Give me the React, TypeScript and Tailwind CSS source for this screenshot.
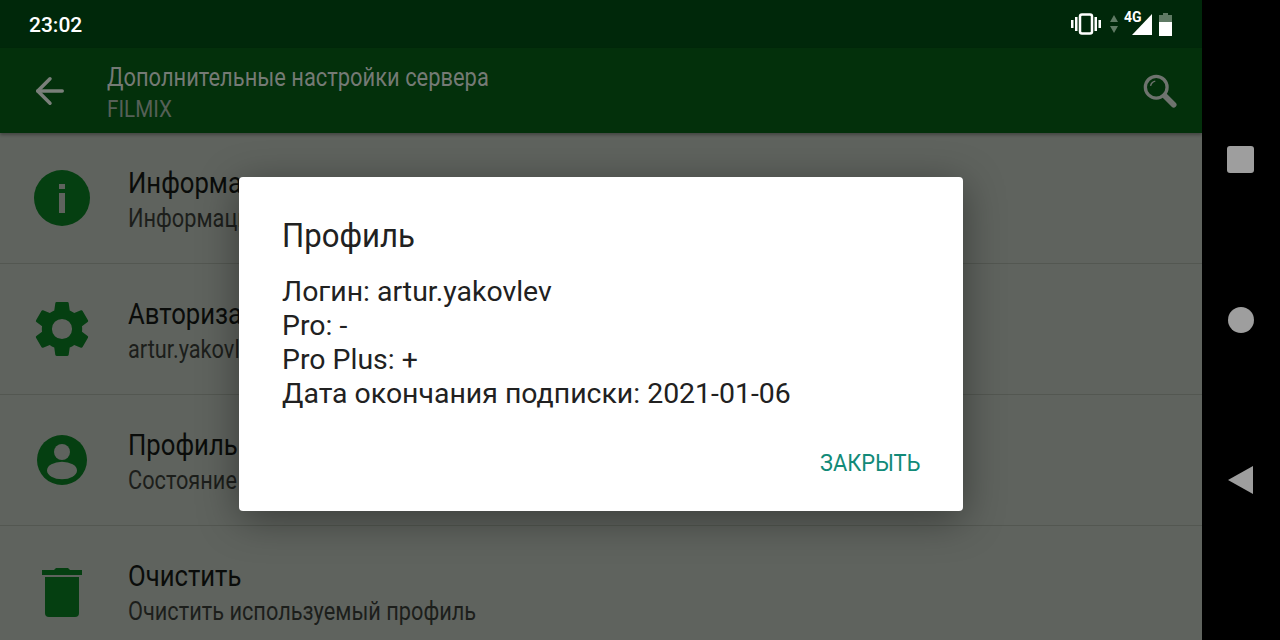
import { ArrowLeft } from "lucide-react";

const font = "font-['Roboto','Noto_Sans',sans-serif]";

function InfoIcon() {
  return (
    <svg width="56" height="56" viewBox="0 0 56 56">
      <circle cx="28" cy="28" r="28" fill="#053f11" />
      <rect x="25" y="23" width="6" height="20" fill="#5f635e" />
      <rect x="25" y="14" width="6" height="5" fill="#5f635e" />
    </svg>
  );
}

function GearIcon() {
  return (
    <svg width="56" height="56" viewBox="2 2 20 20" fill="#053f11">
      <path d="M19.14 12.94c.04-.3.06-.61.06-.94s-.02-.64-.07-.94l2.03-1.58a.49.49 0 0 0 .12-.61l-1.92-3.32a.49.49 0 0 0-.59-.22l-2.39.96a7 7 0 0 0-1.62-.94l-.36-2.54a.48.48 0 0 0-.48-.41h-3.84a.47.47 0 0 0-.47.41l-.36 2.54c-.59.24-1.13.57-1.62.94l-2.39-.96a.48.48 0 0 0-.59.22L2.74 8.87a.47.47 0 0 0 .12.61l2.03 1.58c-.05.3-.09.63-.09.94s.02.64.07.94l-2.03 1.58a.49.49 0 0 0-.12.61l1.92 3.32c.12.22.37.29.59.22l2.39-.96c.5.38 1.03.7 1.62.94l.36 2.54c.05.24.24.41.48.41h3.84c.24 0 .44-.17.47-.41l.36-2.54c.59-.24 1.13-.56 1.62-.94l2.39.96c.22.08.47 0 .59-.22l1.92-3.32a.47.47 0 0 0-.12-.61zM12 15.6A3.6 3.6 0 1 1 12 8.4a3.6 3.6 0 0 1 0 7.2z" />
    </svg>
  );
}

function ProfileIcon() {
  return (
    <svg width="56" height="56" viewBox="0 0 56 56">
      <circle cx="28" cy="28" r="25" fill="#053f11" />
      <circle cx="28" cy="20" r="8" fill="#5f635e" />
      <ellipse cx="28" cy="38.5" rx="15" ry="8.7" fill="#5f635e" />
    </svg>
  );
}

function TrashIcon() {
  return (
    <svg width="56" height="56" viewBox="0 0 56 56" fill="#053f11">
      <path d="M8 6h40v5H8zM20 6l2-2h12l2 2z" />
      <path d="M11 13h34v36a4 4 0 0 1-4 4H15a4 4 0 0 1-4-4z" />
    </svg>
  );
}

const rows = [
  { icon: <InfoIcon />, title: "Информация", sub: "Информация" },
  { icon: <GearIcon />, title: "Авторизация", sub: "artur.yakovlev" },
  { icon: <ProfileIcon />, title: "Профиль", sub: "Состояние" },
  { icon: <TrashIcon />, title: "Очистить", sub: "Очистить используемый профиль" },
];

export default function App() {
  return (
    <div className={`relative flex h-[640px] w-[1280px] overflow-hidden bg-black ${font}`}>
      <div className="flex w-[1202px] flex-col bg-[#5f635e]">
        {/* status bar */}
        <div className="flex h-12 shrink-0 items-center justify-between bg-[#00280a] pl-[29px] pr-[30px]">
          <span className="pt-[3px] text-[21px] font-medium text-white">23:02</span>
          <div className="flex items-center">
            <svg width="30" height="24" viewBox="0 0 30 24" fill="white" className="ml-[1px]">
              <rect x="0" y="8" width="2.5" height="8" />
              <rect x="4" y="5" width="2.5" height="14" />
              <rect x="9" y="2.5" width="12" height="19" rx="2" fill="none" stroke="white" strokeWidth="2.5" />
              <rect x="23.5" y="5" width="2.5" height="14" />
              <rect x="27.5" y="8" width="2.5" height="8" />
            </svg>
            <svg width="10" height="20" viewBox="0 0 10 20" fill="#5f7a64" className="ml-[8px]">
              <path d="M5 1l4 7H1zM5 19l4-7H1z" />
            </svg>
            <div className="relative ml-[5px] h-[24px] w-[28px]">
              <span className="absolute left-0 top-[-2px] text-[14px] font-bold leading-[14px] text-white">4G</span>
              <svg width="20" height="21" viewBox="0 0 20 21" fill="white" className="absolute left-[8px] top-[2px]">
                <path d="M20 0v21H0z" />
              </svg>
            </div>
            <svg width="13" height="23" viewBox="0 0 13 23" className="ml-[7px]">
              <path d="M4 0h5v2h4v21H0V2h4z" fill="#5f7a64" />
              <rect x="0" y="9" width="13" height="14" fill="white" />
            </svg>
          </div>
        </div>

        {/* app bar */}
        <div className="flex h-[85px] shrink-0 items-center bg-[#03300b] pl-[29px] pr-[25px] shadow-[0_2px_3px_rgba(0,0,0,0.3)]">
          <ArrowLeft size={42} strokeWidth={2} color="#7a7f7a" className="shrink-0" />
          <div className="ml-[36px] flex-1 pt-[5px]">
            <div className="origin-left scale-x-[0.842] whitespace-nowrap text-[26px] leading-[32px] text-[#757a75]">
              Дополнительные настройки сервера
            </div>
            <div className="origin-left scale-x-[0.86] text-[24px] leading-[32px] text-[#566058]">FILMIX</div>
          </div>
          <svg width="34" height="34" viewBox="0 0 36 36" fill="none" stroke="#6e736e">
            <circle cx="14" cy="14" r="11.5" strokeWidth="3.5" />
            <path d="M23 23L32.5 32.5" strokeWidth="6" strokeLinecap="round" />
            <path d="M8 12.5a6.5 6.5 0 0 1 5-5" strokeWidth="1.5" />
          </svg>
        </div>

        {/* settings list */}
        <div className="flex flex-col">
          {rows.map((r) => (
            <div key={r.title} className="flex h-[131px] shrink-0 items-center border-b border-[#535751] pl-[34px] last:border-b-0">
              <div className="shrink-0">{r.icon}</div>
              <div className="ml-[38px] mt-[3px]">
                <div className="origin-left scale-x-[0.886] whitespace-nowrap text-[29px] leading-[38px] text-[#0a0c0a]">
                  {r.title}
                </div>
                <div className="origin-left scale-x-[0.87] whitespace-nowrap text-[25px] leading-[34px] text-[#1c1e1b]">
                  {r.sub}
                </div>
              </div>
            </div>
          ))}
        </div>
      </div>

      {/* nav bar */}
      <div className="flex w-[78px] flex-col items-center pr-[1px] pt-[146px]">
        <div className="h-[27px] w-[27px] rounded-[3px] bg-[#9e9e9e]" />
        <div className="mt-[134px] h-[26px] w-[26px] rounded-full bg-[#9e9e9e]" />
        <svg width="25" height="28" viewBox="0 0 25 28" className="mr-[1px] mt-[133px]">
          <path d="M0 14L25 0v28z" fill="#9e9e9e" />
        </svg>
      </div>

      {/* dialog */}
      <div className="absolute left-[239px] top-[177px] flex h-[334px] w-[724px] flex-col rounded-[4px] bg-white px-[43px] shadow-[0_8px_40px_rgba(0,0,0,0.4)]">
        <div className="mt-[37px] origin-left scale-x-[0.915] text-[34px] leading-[42px] text-[#212121]">Профиль</div>
        <div className="mt-[19px] text-[28.45px] leading-[34px] text-[#212121]">
          <div>Логин: artur.yakovlev</div>
          <div>Pro: -</div>
          <div>Pro Plus: +</div>
          <div>Дата окончания подписки: 2021-01-06</div>
        </div>
        <div className="mt-[36px] origin-right scale-x-[0.91] self-end text-[24px] leading-[32px] text-[#128a78]">ЗАКРЫТЬ</div>
      </div>
    </div>
  );
}
